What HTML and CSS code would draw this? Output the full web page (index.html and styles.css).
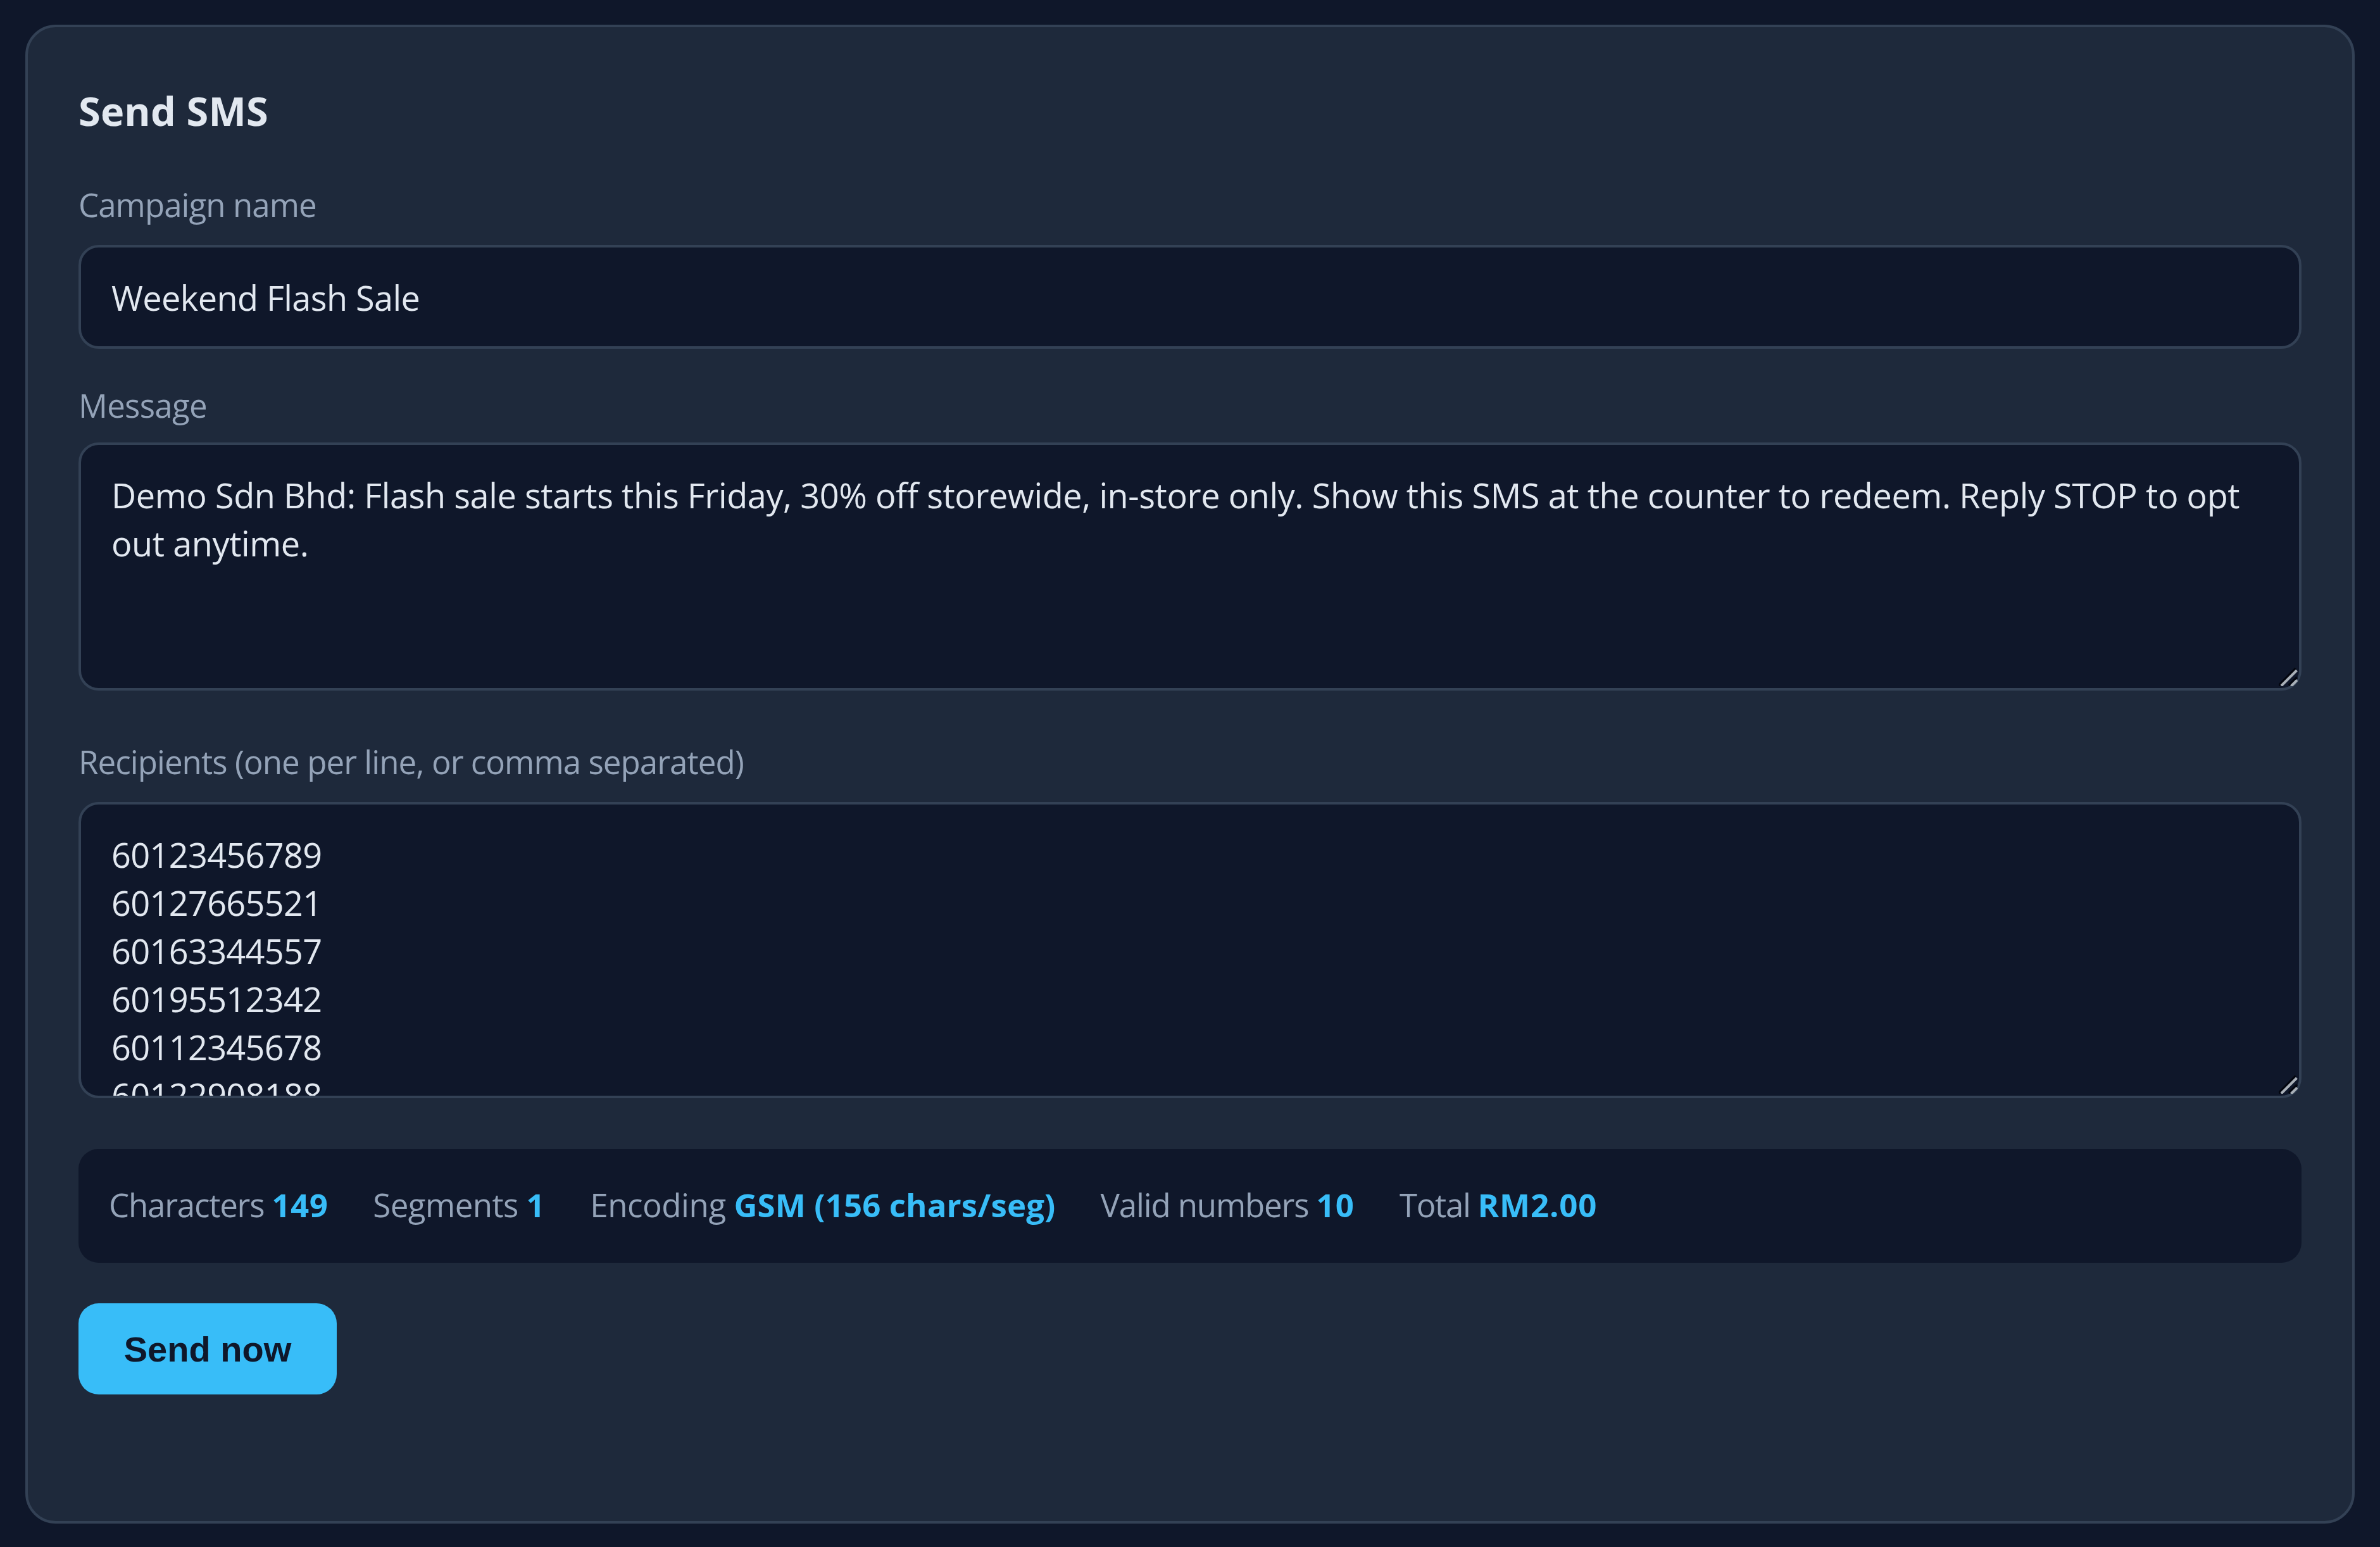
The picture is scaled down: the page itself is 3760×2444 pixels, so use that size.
FILE: index.html
```html
<!DOCTYPE html>
<html lang="en">
<head>
<meta charset="utf-8">
<title>Send SMS</title>
<link rel="stylesheet" href="styles.css">
</head>
<body>
<main class="card">
  <h1 class="title">Send SMS</h1>
  <form class="form">
    <label class="label" for="name">Campaign name</label>
    <input class="control input" id="name" type="text" value="Weekend Flash Sale">

    <label class="label label-message" for="message">Message</label>
    <div class="area">
      <textarea class="control textarea message" id="message">Demo Sdn Bhd: Flash sale starts this Friday, 30% off storewide, in-store only. Show this SMS at the counter to redeem. Reply STOP to opt out anytime.</textarea>
      <svg class="grip" viewBox="0 0 30 30" aria-hidden="true">
        <path class="grip-shade" d="M0 29L27 2M16 29L29 16"/>
        <path class="grip-line" d="M4 29.5L28.5 5M19.5 30L29 20.5"/>
      </svg>
    </div>

    <label class="label label-recipients" for="recipients">Recipients (one per line, or comma separated)</label>
    <div class="area">
      <textarea class="control textarea recipients" id="recipients">60123456789
60127665521
60163344557
60195512342
60112345678
60122908188</textarea>
      <svg class="grip" viewBox="0 0 30 30" aria-hidden="true">
        <path class="grip-shade" d="M0 29L27 2M16 29L29 16"/>
        <path class="grip-line" d="M4 29.5L28.5 5M19.5 30L29 20.5"/>
      </svg>
    </div>

    <div class="stats">
      <span class="stat characters">Characters <b class="value">149</b></span>
      <span class="stat segments">Segments <b class="value">1</b></span>
      <span class="stat encoding">Encoding <b class="value">GSM (156 chars/seg)</b></span>
      <span class="stat valid">Valid numbers <b class="value">10</b></span>
      <span class="stat total">Total <b class="value">RM2.00</b></span>
    </div>

    <button class="send" type="button">Send now</button>
  </form>
</main>
</body>
</html>
```
FILE: styles.css
```css
* {
  box-sizing: border-box;
}

body {
  margin: 0;
  padding: 39px 40px 37px;
  background: #0f172a;
  color: #e2e8f0;
  font-family: "Open Sans", "Noto Sans", sans-serif;
  font-weight: 430;
}

.card {
  height: 2368px;
  padding: 88px 80px 0;
  background: #1e293b;
  border: 4px solid #334155;
  border-radius: 48px;
}

.title {
  margin: 0 0 68px;
  font-size: 63px;
  font-weight: 700;
  line-height: 88px;
  letter-spacing: 0.2px;
}

.form {
  display: flex;
  flex-direction: column;
}

.label {
  margin-bottom: 28px;
  color: #94a3b8;
  font-size: 51px;
  line-height: 72px;
  letter-spacing: -0.93px;
}

.label-message {
  margin: 53px 0 23px;
  letter-spacing: -0.7px;
}

.label-recipients {
  margin-top: 76px;
}

.control {
  display: block;
  width: 100%;
  margin: 0;
  background: #0f172a;
  border: 4px solid #334155;
  border-radius: 32px;
  color: #e2e8f0;
  font-family: inherit;
  font-size: 54px;
  font-weight: inherit;
  outline: none;
}

.input {
  height: 164px;
  padding: 2px 48px 0;
  letter-spacing: -0.56px;
}

.area {
  position: relative;
}

.textarea {
  padding: 41px 48px 40px;
  line-height: 76px;
  overflow: hidden;
  resize: none;
}

.message {
  height: 392px;
  letter-spacing: -0.41px;
}

.recipients {
  height: 468px;
  letter-spacing: -0.65px;
}

.grip {
  position: absolute;
  right: 6px;
  bottom: 7px;
  width: 30px;
  height: 30px;
  fill: none;
  stroke-width: 4;
}

.grip-shade {
  stroke: #03060f;
}

.grip-line {
  stroke: #a9b0b8;
}

.stats {
  display: flex;
  gap: 71px;
  height: 180px;
  margin-top: 80px;
  padding: 52px 48px 56px;
  background: #0f172a;
  border-radius: 32px;
  color: #94a3b8;
  font-size: 51px;
  line-height: 72px;
  white-space: nowrap;
}

.value {
  color: #38bdf8;
  font-weight: 700;
  letter-spacing: 0.5px;
}

.characters {
  letter-spacing: -1.2px;
}

.segments {
  letter-spacing: -0.55px;
}

.encoding {
  letter-spacing: -0.42px;
}

.encoding .value {
  letter-spacing: 0.1px;
}

.valid {
  letter-spacing: -1.13px;
}

.valid .value {
  letter-spacing: 1px;
}

.total {
  letter-spacing: -1.3px;
}

.total .value {
  letter-spacing: 0.8px;
}

.send {
  align-self: flex-start;
  width: 408px;
  height: 144px;
  margin-top: 64px;
  padding: 0;
  background: #38bdf8;
  border: 0;
  border-radius: 32px;
  color: #0f172a;
  font: 700 56px "Liberation Sans", Arial, sans-serif;
}
```
